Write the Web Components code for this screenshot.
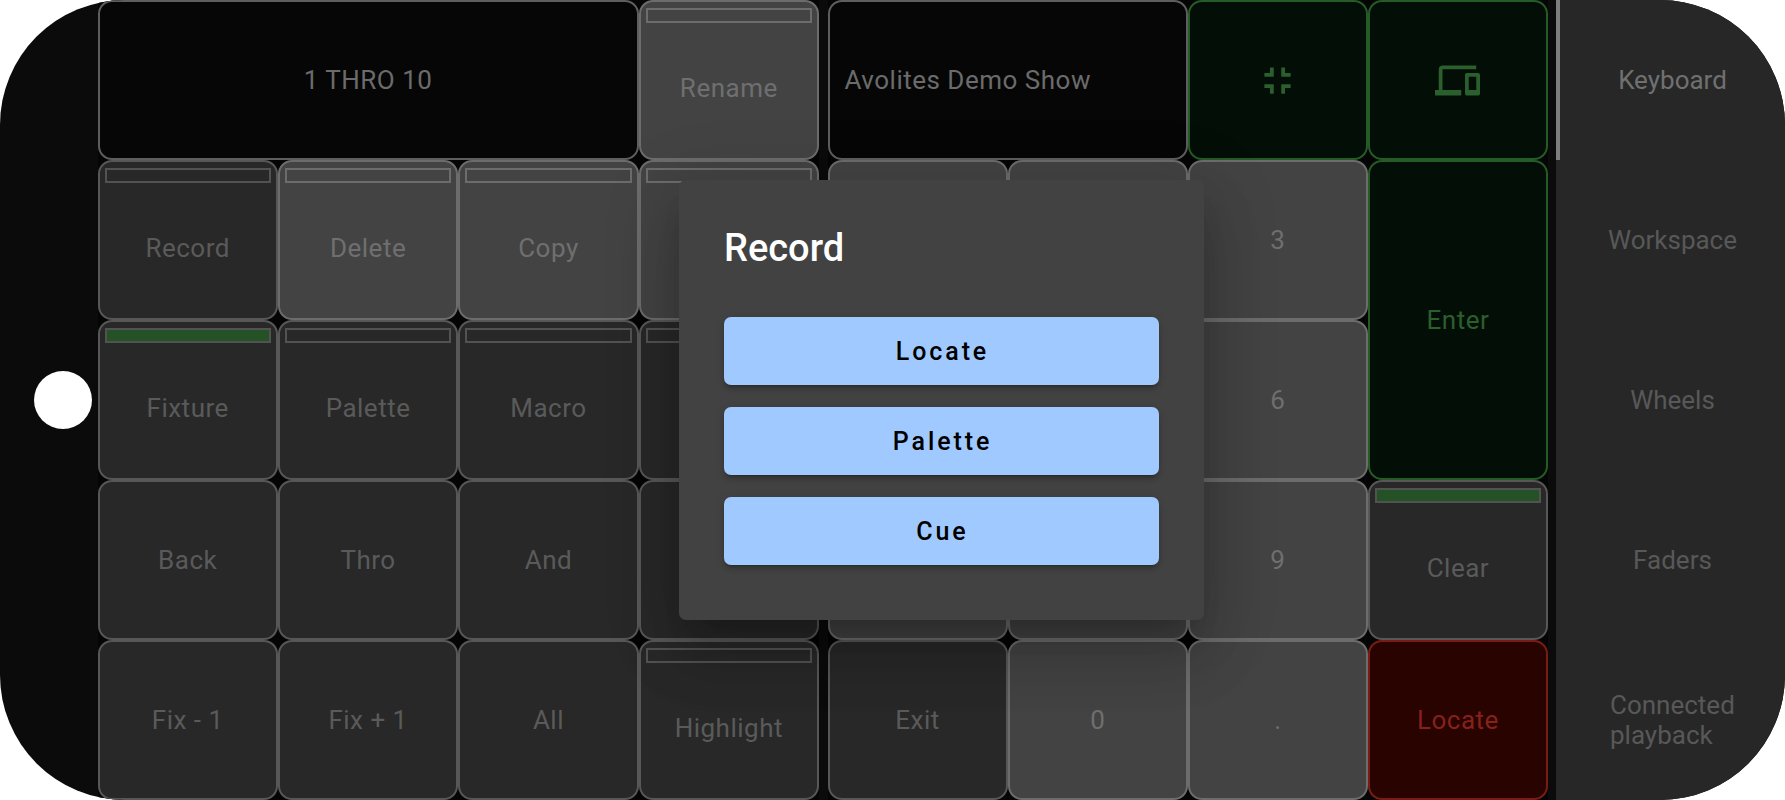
<!DOCTYPE html>
<html>
<head>
<meta charset="utf-8">
<title>Keyboard</title>
<style>
    html, body { margin: 0; height: 100%; background: #fff; }
</style>
</head>
<body>
<console-app>
    <key-grid slot="left" style="margin-left:97.5px;width:721.5px">
        <key-cell tone="black" style="grid-column:span 3">1 THRO 10</key-cell>
        <key-cell tone="light" bar>Rename</key-cell>
        <key-cell bar>Record</key-cell>
        <key-cell tone="light" bar>Delete</key-cell>
        <key-cell tone="light" bar>Copy</key-cell>
        <key-cell tone="light" bar></key-cell>
        <key-cell bar="on">Fixture</key-cell>
        <key-cell bar>Palette</key-cell>
        <key-cell bar>Macro</key-cell>
        <key-cell bar></key-cell>
        <key-cell>Back</key-cell>
        <key-cell>Thro</key-cell>
        <key-cell>And</key-cell>
        <key-cell></key-cell>
        <key-cell>Fix - 1</key-cell>
        <key-cell>Fix + 1</key-cell>
        <key-cell>All</key-cell>
        <key-cell bar>Highlight</key-cell>
    </key-grid>
    <key-grid slot="right" style="margin-left:8.5px;width:720.5px">
        <key-cell tone="black" align="left" style="grid-column:span 2">Avolites Demo Show</key-cell>
        <key-cell tone="green">
            <svg width="45" height="45" viewBox="0 0 24 24" fill="currentColor"><path d="M5 16h3v3h2v-5H5v2zm3-8H5v2h5V5H8v3zm6 11h2v-3h3v-2h-5v5zm2-11V5h-2v5h5V8h-3z"/></svg>
        </key-cell>
        <key-cell tone="green">
            <svg width="45" height="45" viewBox="0 0 24 24" fill="currentColor"><path d="M4 6h18V4H4c-1.1 0-2 .9-2 2v11H0v3h14v-3H4V6zm19 2h-6c-.55 0-1 .45-1 1v10c0 .55.45 1 1 1h6c.55 0 1-.45 1-1V9c0-.55-.45-1-1-1zm-1 9h-4v-7h4v7z"/></svg>
        </key-cell>
        <key-cell tone="light"></key-cell>
        <key-cell tone="light"></key-cell>
        <key-cell tone="light">3</key-cell>
        <key-cell tone="green" style="grid-row:span 2">Enter</key-cell>
        <key-cell tone="light"></key-cell>
        <key-cell tone="light"></key-cell>
        <key-cell tone="light">6</key-cell>
        <key-cell tone="light"></key-cell>
        <key-cell tone="light"></key-cell>
        <key-cell tone="light">9</key-cell>
        <key-cell bar="on">Clear</key-cell>
        <key-cell>Exit</key-cell>
        <key-cell tone="light">0</key-cell>
        <key-cell tone="light">.</key-cell>
        <key-cell tone="red">Locate</key-cell>
    </key-grid>
    <side-tabs slot="side">
        <side-tab active>Keyboard</side-tab>
        <side-tab>Workspace</side-tab>
        <side-tab>Wheels</side-tab>
        <side-tab>Faders</side-tab>
        <side-tab>Connected playback</side-tab>
    </side-tabs>
    <record-dialog slot="overlay" heading="Record">
        <dialog-button>Locate</dialog-button>
        <dialog-button>Palette</dialog-button>
        <dialog-button>Cue</dialog-button>
    </record-dialog>
</console-app>

<script>
customElements.define('console-app',
    class extends HTMLElement {
        constructor() {
            super();
            this.attachShadow({mode: 'open'});
            this.shadowRoot.innerHTML = `
    <style>
    :host{
        display: flex;
        position: relative;
        width: 1785px;
        height: 800px;
        overflow: hidden;
        border-radius: 125px;
        background: #0b0b0b;
        font-family: 'Roboto', sans-serif;
    }
    .home{
        position: absolute;
        left: 34px;
        top: 371px;
        width: 58px;
        height: 58px;
        border-radius: 50%;
        background: #fff;
    }
    </style>
    <slot name="left"></slot>
    <slot name="right"></slot>
    <slot name="side"></slot>
    <div class="home"></div>
    <slot name="overlay"></slot>
`;
        }
    }
);

customElements.define('key-grid',
    class extends HTMLElement {
        constructor() {
            super();
            this.attachShadow({mode: 'open'});
            this.shadowRoot.innerHTML = `
    <style>
    :host{
        display: grid;
        flex: none;
        grid-template-columns: repeat(4, 1fr);
        grid-template-rows: repeat(5, 160px);
        background: #050505;
    }
    </style>
    <slot></slot>
`;
        }
    }
);

customElements.define('key-cell',
    class extends HTMLElement {
        constructor() {
            super();
            this.attachShadow({mode: 'open'});
            this.shadowRoot.innerHTML = `
    <style>
    :host{
        box-sizing: border-box;
        display: flex;
        flex-direction: column;
        padding: 0 7px;
        min-width: 0;
        border: 2px solid #575757;
        border-radius: 14px;
        background: #282828;
        color: #5a5a5a;
        font-size: 26px;
        letter-spacing: .5px;
        line-height: 30px;
    }
    :host([tone="light"]){
        border-color: #6c6c6c;
        background: #434343;
        color: #6f6f6f;
    }
    :host([tone="black"]){
        border-color: #5e5e5e;
        background: #060606;
        color: #6b6b6b;
    }
    :host([tone="green"]){
        border-color: #255b27;
        background: #030e06;
        color: #2b5f2d;
    }
    :host([tone="red"]){
        border-color: #7a1c16;
        background: #280300;
        color: #86211a;
    }
    :host([bar]){
        padding: 6px 5px 5px;
    }
    .bar{
        display: none;
        box-sizing: border-box;
        flex: none;
        height: 15px;
        border: 2px solid #525252;
    }
    :host([tone="light"]) .bar{
        border-color: #6c6c6c;
    }
    :host([bar]) .bar{
        display: block;
    }
    :host([bar="on"]) .bar{
        background: #245226;
    }
    .label{
        flex: 1;
        display: flex;
        align-items: center;
        justify-content: center;
        text-align: center;
    }
    :host([align="left"]) .label{
        justify-content: flex-start;
        padding-left: 8px;
    }
    </style>
    <div class="bar"></div>
    <div class="label"><slot></slot></div>
`;
        }
    }
);

customElements.define('side-tabs',
    class extends HTMLElement {
        constructor() {
            super();
            this.attachShadow({mode: 'open'});
            this.shadowRoot.innerHTML = `
    <style>
    :host{
        display: flex;
        flex-direction: column;
        position: relative;
        box-sizing: border-box;
        flex: none;
        width: 229px;
        height: 800px;
        margin-left: 8px;
        padding-left: 4px;
        background: #272727;
    }
    .thumb{
        position: absolute;
        left: 0;
        top: 0;
        width: 4px;
        height: 160px;
        background: #7d7d7d;
    }
    </style>
    <div class="thumb"></div>
    <slot></slot>
`;
        }
    }
);

customElements.define('side-tab',
    class extends HTMLElement {
        constructor() {
            super();
            this.attachShadow({mode: 'open'});
            this.shadowRoot.innerHTML = `
    <style>
    :host{
        display: flex;
        align-items: center;
        justify-content: center;
        height: 160px;
        padding: 0 50px;
        box-sizing: border-box;
        color: #585858;
        font-size: 26px;
        line-height: 30px;
    }
    :host([active]){
        color: #707070;
    }
    </style>
    <div><slot></slot></div>
`;
        }
    }
);

customElements.define('record-dialog',
    class extends HTMLElement {
        constructor() {
            super();
            this.attachShadow({mode: 'open'});
            this.shadowRoot.innerHTML = `
    <style>
    :host{
        position: absolute;
        left: 678.5px;
        top: 180px;
        box-sizing: border-box;
        display: flex;
        flex-direction: column;
        width: 525.5px;
        height: 440px;
        padding: 46px 45px 0 45.5px;
        border-radius: 7px;
        background: #424242;
        box-shadow: 0 20px 27px -13px rgba(0,0,0,.2), 0 36px 58px 4px rgba(0,0,0,.14), 0 14px 70px 12px rgba(0,0,0,.12);
    }
    h2{
        margin: 0 0 47px;
        color: #fff;
        font-size: 38px;
        font-weight: 500;
        line-height: 44px;
    }
    .actions{
        display: flex;
        flex-direction: column;
        gap: 22px;
    }
    </style>
    <h2></h2>
    <div class="actions"><slot></slot></div>
`;
            this.shadowRoot.querySelector('h2').textContent = this.getAttribute('heading');
        }
    }
);

customElements.define('dialog-button',
    class extends HTMLElement {
        constructor() {
            super();
            this.attachShadow({mode: 'open'});
            this.shadowRoot.innerHTML = `
    <style>
    :host{
        display: flex;
        align-items: center;
        justify-content: center;
        height: 68px;
        padding-left: 2px;
        border-radius: 7px;
        background: #a0caff;
        color: #000;
        font-size: 25px;
        font-weight: 500;
        letter-spacing: 2.9px;
        box-shadow: 0 5px 2px -4px rgba(0,0,0,.2), 0 4px 4px 0 rgba(0,0,0,.14), 0 2px 9px 0 rgba(0,0,0,.12);
    }
    </style>
    <slot></slot>
`;
        }
    }
);
</script>
</body>
</html>
